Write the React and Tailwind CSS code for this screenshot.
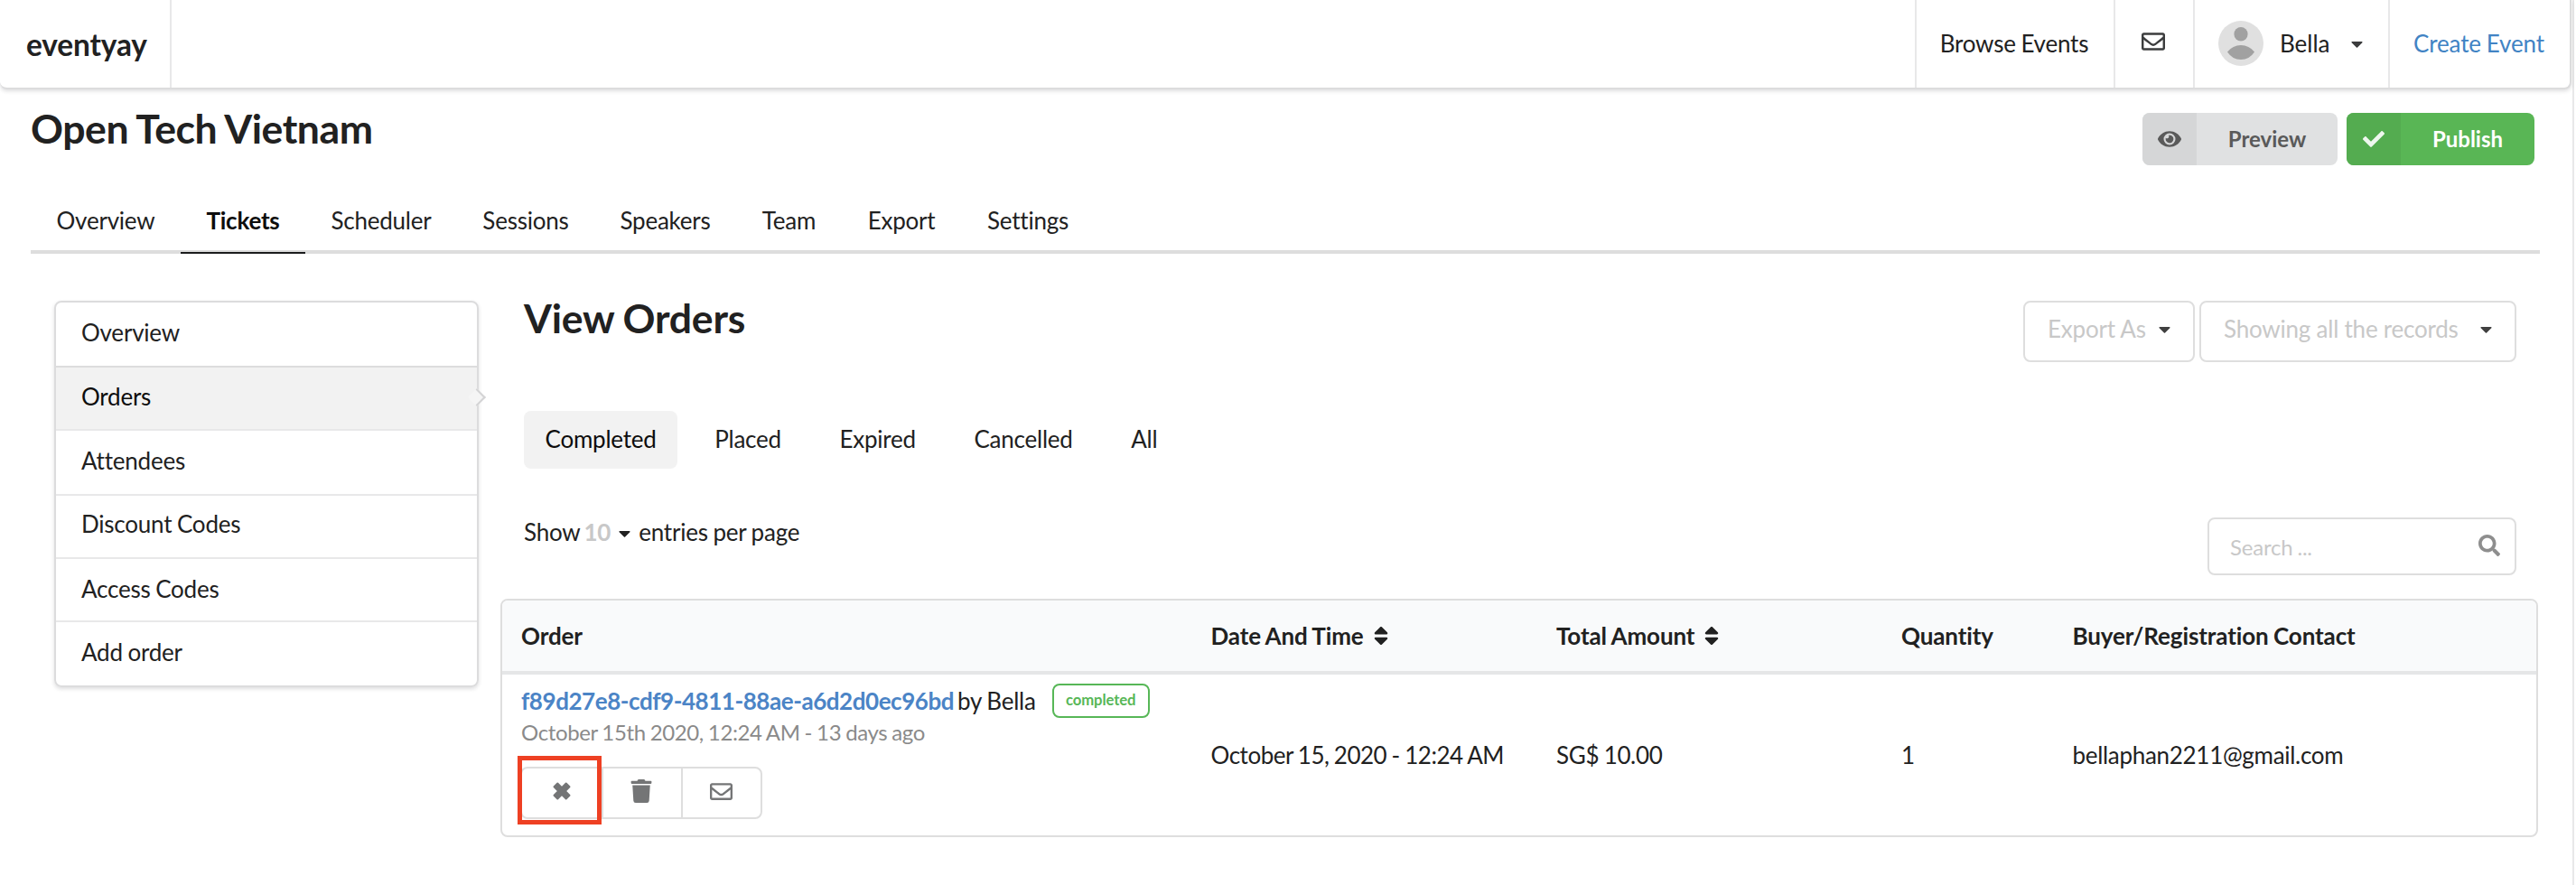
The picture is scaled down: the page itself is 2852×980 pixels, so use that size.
import { FaRegEnvelope, FaEye, FaCheck, FaSearch, FaTrash, FaSort, FaCaretDown } from "react-icons/fa";

const tabs = [
  ["Overview", "w-[166px]"],
  ["Tickets", "w-[138px]"],
  ["Scheduler", "w-[168px]"],
  ["Sessions", "w-[152px]"],
  ["Speakers", "w-[157px]"],
  ["Team", "w-[117px]"],
  ["Export", "w-[132px]"],
  ["Settings", "w-[148px]"],
];

const sections = [
  ["Overview", "h-[70px] pt-[17px]"],
  ["Orders", "h-[70px] pt-[16px]"],
  ["Attendees", "h-[72px] pt-[17px]"],
  ["Discount Codes", "h-[70px] pt-[15px]"],
  ["Access Codes", "h-[70px] pt-[17px]"],
  ["Add order", "h-[72px] pt-[17px]"],
];

const filters = ["Completed", "Placed", "Expired", "Cancelled", "All"];

function CrossIcon() {
  return (
    <svg viewBox="0 0 20 20" className="size-[20px]" fill="currentColor" stroke="currentColor" strokeWidth="2" strokeLinejoin="round">
      <path d="M5.300 1.500L10 6.200L14.700 1.500L18.500 5.300L13.800 10L18.500 14.700L14.700 18.500L10 13.800L5.300 18.500L1.500 14.700L6.200 10L1.500 5.300Z" />
    </svg>
  );
}

function Navbar() {
  return (
    <header className="flex h-[99px] w-[2847px] rounded-b-[8px] border-r-2 border-b-2 border-[#dcdcdd] bg-white shadow-[0_2px_4px_rgba(34,36,38,0.15)]">
      <div className="flex w-[190px] items-center border-r-2 border-[#e8e8e9] pl-[29px] text-[33.430px] font-bold tracking-[-0.110px]">
        <span>eventyay</span>
      </div>
      <nav className="ml-auto flex">
        <a className="flex w-[222px] items-center justify-center border-x-2 border-[#e8e8e9] pr-[2px] pb-[2px]">Browse Events</a>
        <a className="flex w-[88px] items-center justify-center border-r-2 border-[#e8e8e9] pr-[2px] pb-[6px]">
          <FaRegEnvelope className="size-[26px] text-[#3b3c3d]" />
        </a>
        <a className="flex w-[216px] items-center border-r-2 border-[#e8e8e9] pb-px pl-[26px]">
          <svg viewBox="0 0 50 50" className="mr-[18px] size-[50px]">
            <circle cx="25" cy="25" r="25" fill="#e0e0e0" />
            <ellipse cx="25" cy="14.700" rx="7.600" ry="7.700" fill="#a1a1a1" />
            <path d="M10 34.500Q16 27 25 27T40 34.500Q34.500 43 25 43T10 34.500Z" fill="#a1a1a1" />
          </svg>
          <span className="tracking-normal">Bella</span>
          <FaCaretDown className="ml-[19px] size-[21px] text-[#3b3c3d]" />
        </a>
        <a className="flex w-[199px] items-center pb-[2px] pl-[26px] tracking-[-0.120px] text-[#4183c4]">Create Event</a>
      </nav>
    </header>
  );
}

function Sidebar() {
  return (
    <aside className="mt-[52px] ml-[60px] h-[428px] w-[470px] rounded-[8px] border-2 border-[#dcdcdd] shadow-[0_2px_4px_rgba(34,36,38,0.15)]">
      {sections.map(([name, size], i) => (
        <div
          key={name}
          className={`relative pl-7 ${size} ${i ? "border-t-2" : ""} ${
            i === 1 ? "border-[#dcdcdd] bg-[#f2f2f2] text-[#0d0d0d]" : "border-[#e8e8e9]"
          }`}
        >
          {name}
          {i === 1 && (
            <span className="absolute top-[26px] -right-[7px] size-[14px] rotate-45 border-t-2 border-r-2 border-[#d4d4d5] bg-[#f5f5f5]" />
          )}
        </div>
      ))}
    </aside>
  );
}

function Dropdown({ label, size }) {
  return (
    <button className={`flex h-[68px] justify-between rounded-[8px] border-2 border-[#dedede] pt-[13px] pr-[21px] pl-[25px] text-[#c8c8c8] ${size}`}>
      <span>{label}</span>
      <FaCaretDown className="mt-[6px] size-[21px] text-[#404040]" />
    </button>
  );
}

function OrdersTable() {
  const cols = "grid grid-cols-[763.500px_382.500px_382px_189.500px_1fr] pl-[21px]";
  return (
    <div className="h-[264px] w-[2256px] overflow-hidden rounded-[8px] border-2 border-[#dedede]">
      <div className={`${cols} h-[82px] items-center border-b-4 border-[#e5e6e7] bg-[#f9fafb] font-bold tracking-[-0.110px]`}>
        <span>Order</span>
        <span className="flex items-center">
          Date And Time <FaSort className="ml-[6px] size-[26px]" />
        </span>
        <span className="flex items-center">
          Total Amount <FaSort className="ml-[6px] size-[26px]" />
        </span>
        <span>Quantity</span>
        <span>Buyer/Registration Contact</span>
      </div>
      <div className={`${cols} h-[178px] items-center`}>
        <div className="h-full pt-[10px]">
          <div className="flex h-[38px] items-center">
            <b className="pb-px tracking-[-0.450px] text-[#4b84c6]">f89d27e8-cdf9-4811-88ae-a6d2d0ec96bd</b>
            <span className="ml-[4px] pb-px">by Bella</span>
            <span className="ml-[18px] flex h-[38px] w-[108px] items-center justify-center rounded-[8px] border-2 border-[#57b757] pb-[2px] text-[16.700px] font-bold tracking-[-0.110px] text-[#57b757]">
              completed
            </span>
          </div>
          <div className="text-[24px] leading-[32px] tracking-[-0.380px] text-[#8a8a8a]">October 15th 2020, 12:24 AM - 13 days ago</div>
          <div className="relative mt-[22px] -ml-px flex h-[58px] w-[268px] rounded-[8px] border-2 border-[#dedede] text-[#747576]">
            <span className="flex w-[90px] items-center justify-center border-r-2 border-[#dedede] pb-[4px]"><CrossIcon /></span>
            <span className="flex w-[88px] items-center justify-center border-r-2 border-[#dedede] pr-[2px] pb-[4px]"><FaTrash className="size-[26px]" /></span>
            <span className="flex flex-1 items-center justify-center pr-px pb-[4px]"><FaRegEnvelope className="size-[25px]" /></span>
            <span className="absolute -top-[14px] -left-[5px] h-[76px] w-[93px] border-5 border-[#ee4023]" />
          </div>
        </div>
        <span className="tracking-[-0.480px]">October 15, 2020 - 12:24 AM</span>
        <span className="tracking-[-0.350px]">SG$ 10.00</span>
        <span>1</span>
        <span className="tracking-[-0.300px]">bellaphan2211@gmail.com</span>
      </div>
    </div>
  );
}

export default function App() {
  return (
    <div className="h-[980px] w-[2852px] overflow-hidden bg-white font-['Lato',sans-serif] text-[26px] leading-[32px] tracking-[-0.220px] text-[#212121] [font-variant-ligatures:none] [word-spacing:-0.030em]">
      <div className="h-full w-[2850px] border-r-2 border-[#e8e8e9]">
        <Navbar />
        <div className="flex h-[126px] justify-between pr-[42px] pl-[34px]">
          <h1 className="mt-[15px] text-[44.570px] leading-[56px] font-bold tracking-[-0.450px]">Open Tech Vietnam</h1>
          <div className="mt-[26px] flex gap-[10px] text-[24px] font-bold tracking-normal">
            <button className="flex h-[58px] w-[216px] overflow-hidden rounded-[8px] bg-[#e0e1e2] text-[#5a5a5a]">
              <span className="flex h-full w-[60px] items-center justify-center bg-[#d5d6d7] pb-px"><FaEye className="size-[26px]" /></span>
              <span className="flex h-full flex-1 items-center justify-center">Preview</span>
            </button>
            <button className="flex h-[58px] w-[208px] overflow-hidden rounded-[8px] bg-[#59b655] text-white">
              <span className="flex h-full w-[60px] items-center justify-center bg-[#54ac50] pb-px"><FaCheck className="size-[24px] text-[#eef7ee]" /></span>
              <span className="flex h-full flex-1 items-center justify-center">Publish</span>
            </button>
          </div>
        </div>
        <nav className="ml-[34px] flex h-[56px] w-[2778px] border-b-4 border-[#dddddd]">
          {tabs.map(([name, size], i) => (
            <a
              key={name}
              className={`flex h-[56px] justify-center pt-[3px] ${size} ${i === 1 ? "border-b-2 border-[#1b1c1d] font-bold text-[#0d0d0d]" : ""}`}
            >
              {name}
            </a>
          ))}
        </nav>
        <div className="flex">
          <Sidebar />
          <main className="ml-[24px]">
            <div className="flex h-[174px] justify-between pr-[24px] pl-[26px]">
              <h2 className="mt-[43px] text-[44.570px] leading-[56px] font-bold tracking-[-0.220px]">View Orders</h2>
              <div className="mt-[52px] flex gap-[5px]">
                <Dropdown label="Export As" size="w-[190px]" />
                <Dropdown label="Showing all the records" size="w-[351px]" />
              </div>
            </div>
            <div className="flex h-[64px] gap-[17.500px] pl-[26px]">
              {filters.map((name, i) => (
                <span key={name} className={`flex items-center rounded-[8px] px-[23.500px] pb-[3px] ${i ? "" : "bg-[#f2f2f2] text-[#0d0d0d]"}`}>
                  {name}
                </span>
              ))}
            </div>
            <div className="flex h-[144px] justify-between pr-[24px] pl-[26px]">
              <div className="mt-[52px] flex h-[36px] items-center">
                Show <b className="ml-[4px] text-[#c8c8c8]">10</b>
                <FaCaretDown className="mt-[3px] mr-[5px] ml-[5px] size-[21px]" /> entries per page
              </div>
              <label className="mt-[54px] flex h-[64px] w-[342px] items-center justify-between rounded-[8px] border-2 border-[#dedede] pr-[16px] pl-[23px] text-[#c8c8c8]">
                <span className="pt-px text-[24px]">Search ...</span>
                <FaSearch className="-mt-[2px] size-[24px] text-[#8e8e8e]" />
              </label>
            </div>
            <OrdersTable />
          </main>
        </div>
      </div>
    </div>
  );
}
